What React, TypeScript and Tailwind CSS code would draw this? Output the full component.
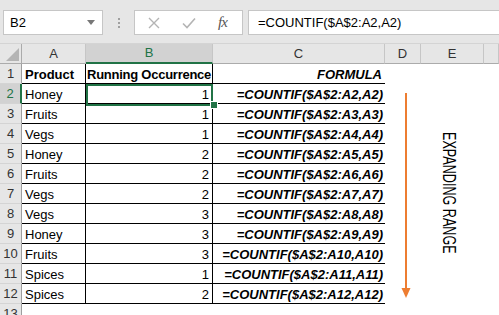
import React from "react";

const rows: [string, string][] = [
  ["Honey", "1"],
  ["Fruits", "1"],
  ["Vegs", "1"],
  ["Honey", "2"],
  ["Fruits", "2"],
  ["Vegs", "2"],
  ["Vegs", "3"],
  ["Honey", "3"],
  ["Fruits", "3"],
  ["Spices", "1"],
  ["Spices", "2"],
];

const colHeads = [
  { label: "A", w: "w-[64px]" },
  { label: "B", w: "w-[127px]", active: true },
  { label: "C", w: "w-[172px]" },
  { label: "D", w: "w-[36px]" },
  { label: "E", w: "w-[63px]" },
  { label: "", w: "flex-1" },
];

function RowHead({ n, active }: { n: number; active?: boolean }) {
  return (
    <div
      className={
        "w-[22px] shrink-0 h-5 flex items-center justify-center border-b border-[#d4d4d4] " +
        (active
          ? "bg-[#d2d2d2] text-[#217346] border-r-2 border-r-[#217346]"
          : "bg-[#e6e6e6] text-[#333] border-r border-r-[#9e9e9e]")
      }
    >
      {n}
    </div>
  );
}

export default function App() {
  return (
    <div className="relative w-[499px] h-[315px] overflow-hidden bg-white font-['Liberation_Sans',Arial,sans-serif] text-[13px] text-black">
      {/* formula bar */}
      <div className="h-[43px] bg-[#e6e6e6] flex items-start pt-[10px] pl-[3px]">
        <div className="w-[100px] h-[25px] bg-white border border-[#c6c6c6] flex items-center justify-between pl-[6px] pr-[7px]">
          <span>B2</span>
          <svg width="8" height="5" viewBox="0 0 8 5">
            <path d="M0 0h8L4 5z" fill="#777" />
          </svg>
        </div>
        <div className="w-[31px] h-[25px] flex flex-col items-center justify-center gap-[2px]">
          <span className="w-[2px] h-[2px] bg-[#a0a0a0]" />
          <span className="w-[2px] h-[2px] bg-[#a0a0a0]" />
          <span className="w-[2px] h-[2px] bg-[#a0a0a0]" />
        </div>
        <div className="w-[109px] h-[25px] bg-white border border-[#c6c6c6] flex items-center pl-[13px] gap-[22px]">
          <svg width="12" height="12" viewBox="0 0 12 12">
            <path d="M1 1l10 10M11 1L1 11" stroke="#b4b4b4" strokeWidth="1.4" />
          </svg>
          <svg width="14" height="12" viewBox="0 0 14 12">
            <path d="M1 6.5l4 4L13 1.5" stroke="#b4b4b4" strokeWidth="1.6" fill="none" />
          </svg>
          <span className="font-['Liberation_Serif',serif] italic text-[15px] text-[#555] tracking-[-1px]">
            fx
          </span>
        </div>
        <div className="ml-[5px] flex-1 h-[25px] bg-white border border-[#c6c6c6] border-r-0 flex items-center pl-[9px]">
          =COUNTIF($A$2:A2,A2)
        </div>
      </div>

      {/* column headers */}
      <div className="flex h-5 bg-[#e6e6e6] border-t border-[#d4d4d4] box-content">
        <div className="w-[22px] shrink-0 h-5 border-r border-b border-[#ababab] flex items-end justify-end p-[2px]">
          <svg width="13" height="13" viewBox="0 0 13 13">
            <path d="M13 0v13H0z" fill="#b4b4b4" />
          </svg>
        </div>
        {colHeads.map((c) => (
          <div
            key={c.label + c.w}
            className={
              c.w +
              " shrink-0 h-5 flex items-center justify-center border-r border-[#c6c6c6] " +
              (c.active
                ? "bg-[#d2d2d2] text-[#217346] border-b-2 border-b-[#217346]"
                : "text-[#333] border-b border-b-[#ababab]")
            }
          >
            {c.label}
          </div>
        ))}
      </div>

      {/* row 1 */}
      <div className="flex h-5">
        <RowHead n={1} />
        <div className="w-[64px] shrink-0 h-5 border-r border-b border-black font-bold flex items-end leading-[16px] pl-[3px]">
          Product
        </div>
        <div className="w-[127px] shrink-0 h-5 border-r border-b border-black font-bold flex items-end leading-[16px] pl-[1px] whitespace-nowrap tracking-[-0.25px]">
          Running Occurrence
        </div>
        <div className="w-[172px] shrink-0 h-5 border-b border-black font-bold italic flex items-end justify-end leading-[16px] pr-[3px]">
          FORMULA
        </div>
      </div>

      {/* data rows */}
      {rows.map(([product, count], i) => {
        const n = i + 2;
        return (
          <div key={n} className="flex h-5">
            <RowHead n={n} active={n === 2} />
            <div className="w-[64px] shrink-0 h-5 border-r border-b border-black flex items-end leading-[16px] pl-[3px]">
              {product}
            </div>
            <div
              className={
                "w-[127px] shrink-0 h-5 border-r border-b border-black flex items-end justify-end leading-[16px] pr-[3px] " +
                (n === 2 ? "relative" : "")
              }
            >
              {count}
              {n === 2 && (
                <>
                  <div className="absolute left-0 top-0 w-[127px] h-[22px] border-2 border-[#217346]" />
                  <div className="absolute left-[124px] top-[17px] w-2 h-2 bg-[#217346] border border-white" />
                </>
              )}
            </div>
            <div className="w-[172px] shrink-0 h-5 border-b border-black font-bold italic flex items-end justify-end leading-[16px] pr-[2px] whitespace-nowrap">
              =COUNTIF($A$2:A{n},A{n})
            </div>
          </div>
        );
      })}

      {/* row 13 */}
      <div className="flex h-5">
        <RowHead n={13} />
      </div>

      {/* annotation */}
      <svg
        className="absolute left-[400px] top-[93px]"
        width="12"
        height="206"
        viewBox="0 0 12 206"
      >
        <path d="M6 0v196" stroke="#ed7d31" strokeWidth="2" />
        <path d="M1.5 195h9L6 205z" fill="#ed7d31" />
      </svg>
      <div className="absolute left-[440px] top-[132px] text-[18px] leading-[18px] whitespace-nowrap [writing-mode:vertical-rl] origin-top scale-y-70">
        EXPANDING RANGE
      </div>
    </div>
  );
}
